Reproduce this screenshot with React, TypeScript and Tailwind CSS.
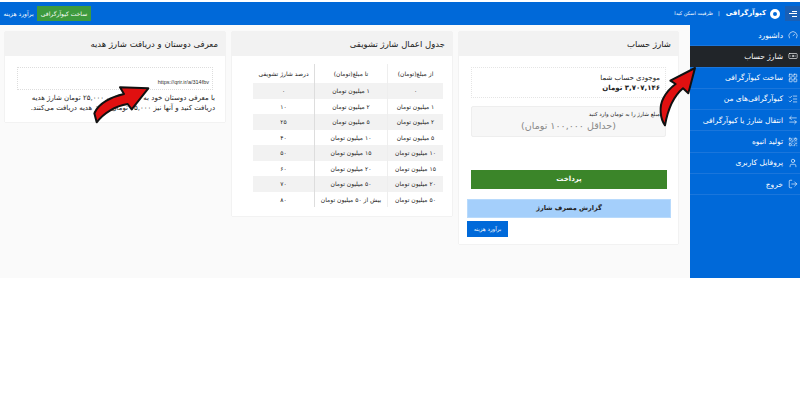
import React from 'react';
import { Gauge, Banknote, LayoutGrid, ListChecks, ArrowLeftRight, QrCode, User, LogOut } from 'lucide-react';

const rows = [
  ['۰', '۱ میلیون تومان', '۰'],
  ['۱ میلیون تومان', '۲ میلیون تومان', '۱۰'],
  ['۲ میلیون تومان', '۵ میلیون تومان', '۲۵'],
  ['۵ میلیون تومان', '۱۰ میلیون تومان', '۴۰'],
  ['۱۰ میلیون تومان', '۱۵ میلیون تومان', '۵۰'],
  ['۱۵ میلیون تومان', '۲۰ میلیون تومان', '۶۰'],
  ['۲۰ میلیون تومان', '۵۰ میلیون تومان', '۷۰'],
  ['۵۰ میلیون تومان', 'بیش از ۵۰ میلیون تومان', '۸۰'],
];

const menu = [
  { label: 'داشبورد', icon: Gauge },
  { label: 'شارژ حساب', icon: Banknote, active: true },
  { label: 'ساخت کیوآرگرافی', icon: LayoutGrid },
  { label: 'کیوآرگرافی‌های من', icon: ListChecks },
  { label: 'انتقال شارژ یا کیوآرگرافی', icon: ArrowLeftRight },
  { label: 'تولید انبوه', icon: QrCode },
  { label: 'پروفایل کاربری', icon: User },
  { label: 'خروج', icon: LogOut },
];

const CardHead = ({ title }: { title: string }) => (
  <div dir="rtl" className="h-[24px] bg-[#f2f2f2] flex items-center px-[7px] text-[8.5px] text-[#222]">
    {title}
  </div>
);

export default function App() {
  return (
    <div className="relative w-[800px] h-[400px] overflow-hidden bg-white font-['DejaVu_Sans',sans-serif]">
      <div className="h-[2px] bg-white" />
      <header className="h-[23px] bg-[#0069d9] flex items-center justify-between text-white">
        <div className="flex items-center h-full">
          <span dir="rtl" className="text-[6px] w-[37px] text-center">برآورد هزینه</span>
          <span dir="rtl" className="h-[15px] w-[54px] bg-[#3d9a3d] text-[6px] flex items-center justify-center">ساخت کیوآرگرافی</span>
        </div>
        <div className="flex items-center h-full">
          <span dir="rtl" className="text-[5px] mr-[5px]">ظرفیت اسکن کیدا</span>
          <span className="text-[5px] mr-[6px]">|</span>
          <span dir="rtl" className="text-[7px] font-bold mr-[4px]">کیوآرگرافی</span>
          <span className="w-[10px] h-[10px] rounded-full border-[3px] border-white mr-[5px]" />
          <span className="w-[15px] h-[15px] bg-[#1a5fb4] flex flex-col items-end justify-center gap-[1.5px] pr-[3px]">
            <span className="w-[5px] h-px bg-white" />
            <span className="w-[8px] h-px bg-white" />
            <span className="w-[5px] h-px bg-white" />
          </span>
        </div>
      </header>
      <div className="flex h-[253px] bg-[#fafafa]">
        <main className="flex-1 flex items-start gap-[7px] pt-[7px] pl-[5px] pr-[12px]">
          <section className="w-[220px] h-[90px] bg-white shadow-[0_0_1px_rgba(0,0,0,0.2)]">
            <CardHead title="معرفی دوستان و دریافت شارژ هدیه" />
            <div className="px-[12px] pt-[11px]">
              <div className="h-[23px] border border-dotted border-[#ddd] flex items-end justify-end pr-[3px] pb-[3px] text-[5.5px] font-['Liberation_Sans',sans-serif] text-[#333]">
                https://qrir.ir/a/314fbv
              </div>
              <p dir="rtl" className="text-[7px] leading-[10px] text-[#222] mt-[3px] -mx-[2px]">
                با معرفی دوستان خود به کیوآرگرافی، ۲۵,۰۰۰ تومان شارژ هدیه دریافت کنید و آنها نیز ۱۵,۰۰۰ تومان شارژ هدیه دریافت می‌کنند.
              </p>
            </div>
          </section>
          <section className="w-[220px] h-[184px] bg-white shadow-[0_0_1px_rgba(0,0,0,0.2)]">
            <CardHead title="جدول اعمال شارژ تشویقی" />
            <div className="pt-[8px] pl-[21px] pr-[9px]">
              <div dir="rtl" className="grid grid-cols-[55px_73px_62px] text-[6px] text-[#222] text-center">
                <div className="h-[19px] flex items-center justify-center">از مبلغ(تومان)</div>
                <div className="h-[19px] flex items-center justify-center border-r border-[#eee]">تا مبلغ(تومان)</div>
                <div className="h-[19px] flex items-center justify-center border-r border-[#ddd]">درصد شارژ تشویقی</div>
                {rows.map((r, i) => (
                  <React.Fragment key={i}>
                    <div className={`h-[15.5px] flex items-center justify-center ${i % 2 === 0 ? 'bg-[#f2f2f2]' : 'bg-white'}`}>{r[0]}</div>
                    <div className={`h-[15.5px] flex items-center justify-center border-r border-[#eee] ${i % 2 === 0 ? 'bg-[#f2f2f2]' : 'bg-white'}`}>{r[1]}</div>
                    <div className={`h-[15.5px] flex items-center justify-center border-r border-[#ddd] ${i % 2 === 0 ? 'bg-[#f2f2f2]' : 'bg-white'}`}>{r[2]}</div>
                  </React.Fragment>
                ))}
              </div>
            </div>
          </section>
          <section className="w-[219px] h-[212px] bg-white shadow-[0_0_1px_rgba(0,0,0,0.2)]">
            <CardHead title="شارژ حساب" />
            <div className="px-[8px] pt-[11px]">
              <div dir="rtl" className="mx-[4px] h-[31px] border border-dotted border-[#e5e5e5] px-[5px] flex flex-col justify-center text-[#222]">
                <div className="text-[7px] leading-[10px]">موجودی حساب شما</div>
                <div className="text-[7px] leading-[10px] font-bold">۳,۷۰۷,۱۴۶ تومان</div>
              </div>
              <div dir="rtl" className="mx-[4px] mt-[8px] h-[31px] bg-[#f7f7f7] border border-[#eee] rounded-[2px] flex flex-col items-center">
                <div className="w-full text-[5.5px] leading-[8px] mt-[3px] pr-[5px] text-[#222]">مبلغ شارژ را به تومان وارد کنید</div>
                <div className="text-[9.5px] leading-[14px] mt-[1px] text-[#888]">(حداقل ۱۰۰,۰۰۰ تومان)</div>
              </div>
              <button className="block ml-[4px] mt-[33px] w-[196px] h-[19px] bg-[#3b8529] text-white text-[7px] font-bold">پرداخت</button>
              <button className="block mt-[10px] w-[204px] h-[19px] bg-[#a4cffb] border border-[#b8dafc] text-[#222] text-[6.5px] font-bold">گزارش مصرف شارژ</button>
              <button className="block mt-[3px] w-[41px] h-[16px] bg-[#0069d9] text-white text-[5.5px]">برآورد هزینه</button>
            </div>
          </section>
        </main>
        <aside className="w-[110px] bg-[#0069d9] text-white">
          {menu.map((m) => (
            <div
              key={m.label}
              className={`h-[21.3px] flex items-center justify-end gap-[5px] pr-[2px] border-b border-[#1a76dc] text-[7.5px] ${m.active ? 'bg-[#212529]' : ''}`}
            >
              <span dir="rtl" className="whitespace-nowrap">{m.label}</span>
              <m.icon size={10} strokeWidth={1.5} />
            </div>
          ))}
        </aside>
      </div>
      <svg viewBox="0 0 210 150" className="absolute left-[85px] top-[80px] w-[70px] h-[50px]">
        <path
          d="M190 25 L105 22 L117 42 C80 50 40 70 28 100 L35 127 C55 100 90 78 128 72 L140 88 Z"
          fill="#e01010"
          stroke="#111"
          strokeWidth="6"
          strokeLinejoin="round"
        />
      </svg>
      <svg viewBox="0 0 150 210" className="absolute left-[655px] top-[60px] w-[50px] h-[70px]">
        <path
          d="M120 24 L100 100 L84 85 C60 105 40 140 30 196 C15 175 12 140 25 115 C35 95 48 82 62 72 L46 62 Z"
          fill="#e01010"
          stroke="#111"
          strokeWidth="6"
          strokeLinejoin="round"
        />
      </svg>
    </div>
  );
}
